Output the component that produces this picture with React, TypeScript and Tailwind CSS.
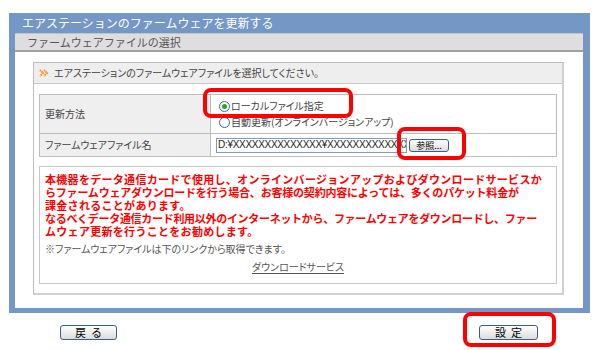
import React from 'react';

const jp = "font-['Noto_Sans_CJK_JP','Noto_Sans',sans-serif]";

function Chevrons() {
    return (
        <svg width="10" height="8" viewBox="0 0 10 8" className="shrink-0">
            <path d="M1 1 L4 4 L1 7" fill="none" stroke="#f7941d" strokeWidth="2" strokeDasharray="1.4 0.6" />
            <path d="M5 1 L8 4 L5 7" fill="none" stroke="#f7941d" strokeWidth="2" strokeDasharray="1.4 0.6" />
        </svg>
    );
}

function Radio({ checked }: { checked?: boolean }) {
    return (
        <span className="w-[11px] h-[11px] rounded-full border border-[#2f6ea5] bg-white flex items-center justify-center shrink-0">
            {checked && <span className="w-[5px] h-[5px] rounded-full bg-[#2aa52a]"></span>}
        </span>
    );
}

function Btn({ label, w }: { label: string; w: string }) {
    return (
        <button className={`${w} h-[15px] flex items-center justify-center border border-[#3d5f86] rounded-[3px] bg-gradient-to-b from-white to-[#dcdcdc] text-[11px] leading-none text-black tracking-[5px] pl-[5px]`}>
            {label}
        </button>
    );
}

export default function App() {
    return (
        <div className={`relative w-[600px] h-[350px] bg-white overflow-hidden ${jp}`}>
            {/* Main blue panel */}
            <div className="ml-[9px] mt-[13px] w-[581px] bg-[#7497c6] pb-[5px]">
                <div className="h-[20px] pl-[13px] flex items-center text-white text-[12px] leading-none">
                    エアステーションのファームウェアを更新する
                </div>
                <div className="ml-[6px] mr-[7px] bg-white">
                    <div className="h-[19px] bg-[#dedede] border-t border-[#c4c4c4] border-b-2 border-b-[#a0a0a0] pl-[12px] flex items-center text-[11px] text-[#555] leading-none">
                        ファームウェアファイルの選択
                    </div>

                    <div className="pt-[10px] pb-[13px] pl-[18px] pr-[19px]">
                        <div className="border border-[#bdbdbd] border-b-2 border-r-2 border-b-[#d0d0d0] border-r-[#d0d0d0] px-[5px] pb-[9px]">
                            <div className="-mx-[5px] h-[21px] bg-[#eeeeee] border-b border-[#c8c8c8] pl-[5px] flex items-center gap-[5px] text-[10px] text-[#444] leading-none [font-feature-settings:'palt']">
                                <Chevrons />
                                <span>エアステーションのファームウェアファイルを選択してください。</span>
                            </div>

                            {/* Settings table */}
                            <div className="mt-[10px] border border-[#bdbdbd] text-[10px] text-[#444] leading-none [font-feature-settings:'palt']">
                                <div className="flex h-[39px] border-b border-[#bdbdbd]">
                                    <div className="w-[171px] bg-[#efefef] border-r border-[#bdbdbd] pl-[5px] flex items-center">更新方法</div>
                                    <div className="flex-1 pl-[8px] flex flex-col justify-center gap-[5px]">
                                        <div className="flex items-center gap-[1px]">
                                            <Radio checked />
                                            <span>ローカルファイル指定</span>
                                        </div>
                                        <div className="flex items-center gap-[1px]">
                                            <Radio />
                                            <span>自動更新(オンラインバージョンアップ)</span>
                                        </div>
                                    </div>
                                </div>
                                <div className="flex h-[22px]">
                                    <div className="w-[171px] bg-[#efefef] border-r border-[#bdbdbd] pl-[5px] flex items-center">ファームウェアファイル名</div>
                                    <div className="flex-1 pl-[5px] flex items-center gap-[2px]">
                                        <div className="w-[191px] h-[15px] border border-[#7f9db9] bg-white overflow-hidden whitespace-nowrap pl-[1px] flex items-center text-[10px] text-[#222] font-['Liberation_Sans','Noto_Sans_CJK_JP',sans-serif] tracking-[-0.3px]">
                                            D:¥XXXXXXXXXXXXXX¥XXXXXXXXXXXXXXXXXX
                                        </div>
                                        <button className="w-[40px] h-[13px] border border-[#3d5f86] rounded-[3px] bg-gradient-to-b from-white to-[#dcdcdc] text-[9px] leading-none text-black flex items-center justify-center">
                                            参照...
                                        </button>
                                    </div>
                                </div>
                            </div>

                            {/* Notice box */}
                            <div className="mt-[9px] h-[118px] border border-[#c8c8c8] pl-[5px] pt-[6px]">
                                <div className="text-[11px] leading-[13px] font-bold text-[#ff0000] whitespace-nowrap">
                                    <div className="tracking-[0.3px]">本機器をデータ通信カードで使用し、オンラインバージョンアップおよびダウンロードサービスか</div>
                                    <div className="tracking-[-0.2px]">らファームウェアダウンロードを行う場合、お客様の契約内容によっては、多くのパケット料金が</div>
                                    <div className="tracking-[0.3px]">課金されることがあります。</div>
                                    <div className="tracking-[-0.3px]">なるべくデータ通信カード利用以外のインターネットから、ファームウェアをダウンロードし、ファー</div>
                                    <div className="tracking-[0.3px]">ムウェア更新を行うことをお勧めします。</div>
                                </div>
                                <div className="mt-[6px] text-[10px] leading-none text-[#555] [font-feature-settings:'palt']">
                                    ※ファームウェアファイルは下のリンクから取得できます。
                                </div>
                                <div className="mt-[8px] flex justify-center pr-[5px] text-[10px] leading-none text-[#555] [font-feature-settings:'palt']">
                                    <span className="underline underline-offset-2">ダウンロードサービス</span>
                                </div>
                            </div>
                        </div>
                    </div>
                </div>
            </div>

            {/* Bottom buttons */}
            <div className="mt-[12px] flex justify-between pl-[60px] pr-[62px]">
                <Btn label="戻る" w="w-[57px]" />
                <Btn label="設定" w="w-[59px]" />
            </div>

            {/* Red annotation frames */}
            <div className="absolute left-[203px] top-[88px] w-[150px] h-[30px] border-4 border-[#ff0000] rounded-[8px]"></div>
            <div className="absolute left-[397px] top-[127px] w-[69px] h-[33px] border-4 border-[#ff0000] rounded-[8px]"></div>
            <div className="absolute left-[463px] top-[312px] w-[93px] h-[35px] border-4 border-[#ff0000] rounded-[8px]"></div>
        </div>
    );
}
